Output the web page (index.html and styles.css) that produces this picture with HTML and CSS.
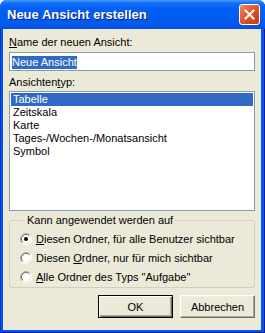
FILE: index.html
```html
<!DOCTYPE html>
<html lang="de">

<head>
    <meta charset="UTF-8">
    <title>Neue Ansicht erstellen</title>
    <link rel="stylesheet" href="styles.css">
</head>

<body>
    <div class="window">
        <div class="titlebar">
            <span class="title">Neue Ansicht erstellen</span>
            <div class="close">
                <svg width="11" height="11" viewBox="0 0 11 11">
                    <path d="M1.5 1.5 L9.5 9.5 M9.5 1.5 L1.5 9.5" stroke="#fff" stroke-width="2" stroke-linecap="square" fill="none" />
                </svg>
            </div>
        </div>

        <div class="client">
            <div class="label"><u>N</u>ame der neuen Ansicht:</div>
            <div class="textbox"><span class="sel">Neue Ansicht</span></div>

            <div class="label type-label">Ansichten<u>t</u>yp:</div>
            <ul class="listbox">
                <li class="selected">Tabelle</li>
                <li>Zeitskala</li>
                <li>Karte</li>
                <li>Tages-/Wochen-/Monatsansicht</li>
                <li>Symbol</li>
            </ul>

            <fieldset class="group">
                <legend>Kann angewendet werden auf</legend>
                <div class="radio">
                    <svg class="radio-icon" width="12" height="12" viewBox="0 0 12 12">
                        <circle cx="6" cy="6" r="4.5" fill="#fff" />
                        <path d="M2.11 9.89 A5.5 5.5 0 0 1 9.89 2.11" stroke="#ACA899" fill="none" />
                        <path d="M9.89 2.11 A5.5 5.5 0 0 1 2.11 9.89" stroke="#fff" fill="none" />
                        <path d="M2.82 9.18 A4.5 4.5 0 0 1 9.18 2.82" stroke="#716F64" fill="none" />
                        <path d="M9.18 2.82 A4.5 4.5 0 0 1 2.82 9.18" stroke="#F1EFE2" fill="none" />
                        <circle cx="6" cy="6" r="2" fill="#000" />
                    </svg>
                    <span><u>D</u>iesen Ordner, für alle Benutzer sichtbar</span>
                </div>
                <div class="radio">
                    <svg class="radio-icon" width="12" height="12" viewBox="0 0 12 12">
                        <circle cx="6" cy="6" r="4.5" fill="#fff" />
                        <path d="M2.11 9.89 A5.5 5.5 0 0 1 9.89 2.11" stroke="#ACA899" fill="none" />
                        <path d="M9.89 2.11 A5.5 5.5 0 0 1 2.11 9.89" stroke="#fff" fill="none" />
                        <path d="M2.82 9.18 A4.5 4.5 0 0 1 9.18 2.82" stroke="#716F64" fill="none" />
                        <path d="M9.18 2.82 A4.5 4.5 0 0 1 2.82 9.18" stroke="#F1EFE2" fill="none" />
                    </svg>
                    <span>Diesen <u>O</u>rdner, nur für mich sichtbar</span>
                </div>
                <div class="radio">
                    <svg class="radio-icon" width="12" height="12" viewBox="0 0 12 12">
                        <circle cx="6" cy="6" r="4.5" fill="#fff" />
                        <path d="M2.11 9.89 A5.5 5.5 0 0 1 9.89 2.11" stroke="#ACA899" fill="none" />
                        <path d="M9.89 2.11 A5.5 5.5 0 0 1 2.11 9.89" stroke="#fff" fill="none" />
                        <path d="M2.82 9.18 A4.5 4.5 0 0 1 9.18 2.82" stroke="#716F64" fill="none" />
                        <path d="M9.18 2.82 A4.5 4.5 0 0 1 2.82 9.18" stroke="#F1EFE2" fill="none" />
                    </svg>
                    <span><u>A</u>lle Ordner des Typs "Aufgabe"</span>
                </div>
            </fieldset>

            <div class="buttons">
                <button type="button" class="btn btn-default">OK</button>
                <button type="button" class="btn">Abbrechen</button>
            </div>
        </div>
    </div>
</body>

</html>
```

FILE: styles.css
```css
html,
body {
    margin: 0;
    padding: 0;
    background: #fff;
}

.window {
    width: 265px;
    height: 333px;
    display: flex;
    flex-direction: column;
    background: #0058EC;
    box-shadow: inset 1px 0 #0831D9, inset -1px -1px #001EA0;
    border-radius: 7px 7px 0 0;
    font-family: "Liberation Sans", sans-serif;
    font-size: 11px;
    color: #000;
}

.titlebar {
    height: 29px;
    flex: none;
    display: flex;
    align-items: center;
    justify-content: space-between;
    padding: 0 5px 0 7px;
    border-radius: 7px 7px 0 0;
    background: linear-gradient(to bottom, #4A9CFF 0px, #1470FA 3px, #0460F4 8px, #005CF0 20px, #0058EB 26px, #004EDC 29px);
}

.title {
    font-family: "Liberation Sans", sans-serif;
    font-weight: bold;
    font-size: 13px;
    color: #fff;
    text-shadow: 1px 1px #0A1883;
}

.close {
    width: 19px;
    height: 19px;
    display: flex;
    align-items: center;
    justify-content: center;
    border: 1px solid #fff;
    border-radius: 3px;
    background: linear-gradient(to bottom right, #F08A66, #E2572C 45%, #C8380C);
}

.client {
    flex: 1;
    margin: 0 4px 3px 3px;
    padding: 7px 6px 0 6px;
    background: #ECE9D8;
}

.label {
    line-height: 13px;
    margin-bottom: 3px;
}

.type-label {
    margin-top: 5px;
    margin-bottom: 2px;
}

.textbox {
    height: 17px;
    border: 1px solid #7F9DB9;
    background: #fff;
    padding: 0 2px;
    line-height: 17px;
}

.sel {
    display: inline-block;
    line-height: 13px;
    background: #316AC5;
    color: #fff;
    vertical-align: middle;
}

.listbox {
    list-style: none;
    margin: 0;
    height: 116px;
    padding: 1px;
    border: 1px solid #7F9DB9;
    background: #fff;
}

.listbox li {
    line-height: 13px;
    padding-left: 2px;
}

.listbox li.selected {
    background: #316AC5;
    color: #fff;
}

.group {
    margin: 3px 0 0 0;
    padding: 2px 0 1px 10px;
    border: 1px solid #D0D0BF;
    border-radius: 3px;
}

.group legend {
    margin-left: 5px;
    padding: 0 2px;
    line-height: 13px;
}

.radio {
    height: 19px;
    display: flex;
    align-items: center;
    gap: 4px;
}

.radio-icon {
    flex: none;
}

.buttons {
    display: flex;
    justify-content: flex-end;
    gap: 7px;
    margin-top: 7px;
}

.btn {
    width: 75px;
    height: 23px;
    padding: 0;
    font-family: "Liberation Sans", sans-serif;
    font-size: 11px;
    color: #000;
    background: #ECE9D8;
    border: 1px solid;
    border-color: #fff #716F64 #716F64 #fff;
    box-shadow: inset -1px -1px #ACA899, inset 1px 1px #F1EFE2;
}

.btn-default {
    border: 1px solid #000;
    box-shadow: inset 1px 1px #fff, inset -1px -1px #716F64, inset -2px -2px #ACA899;
}
```
